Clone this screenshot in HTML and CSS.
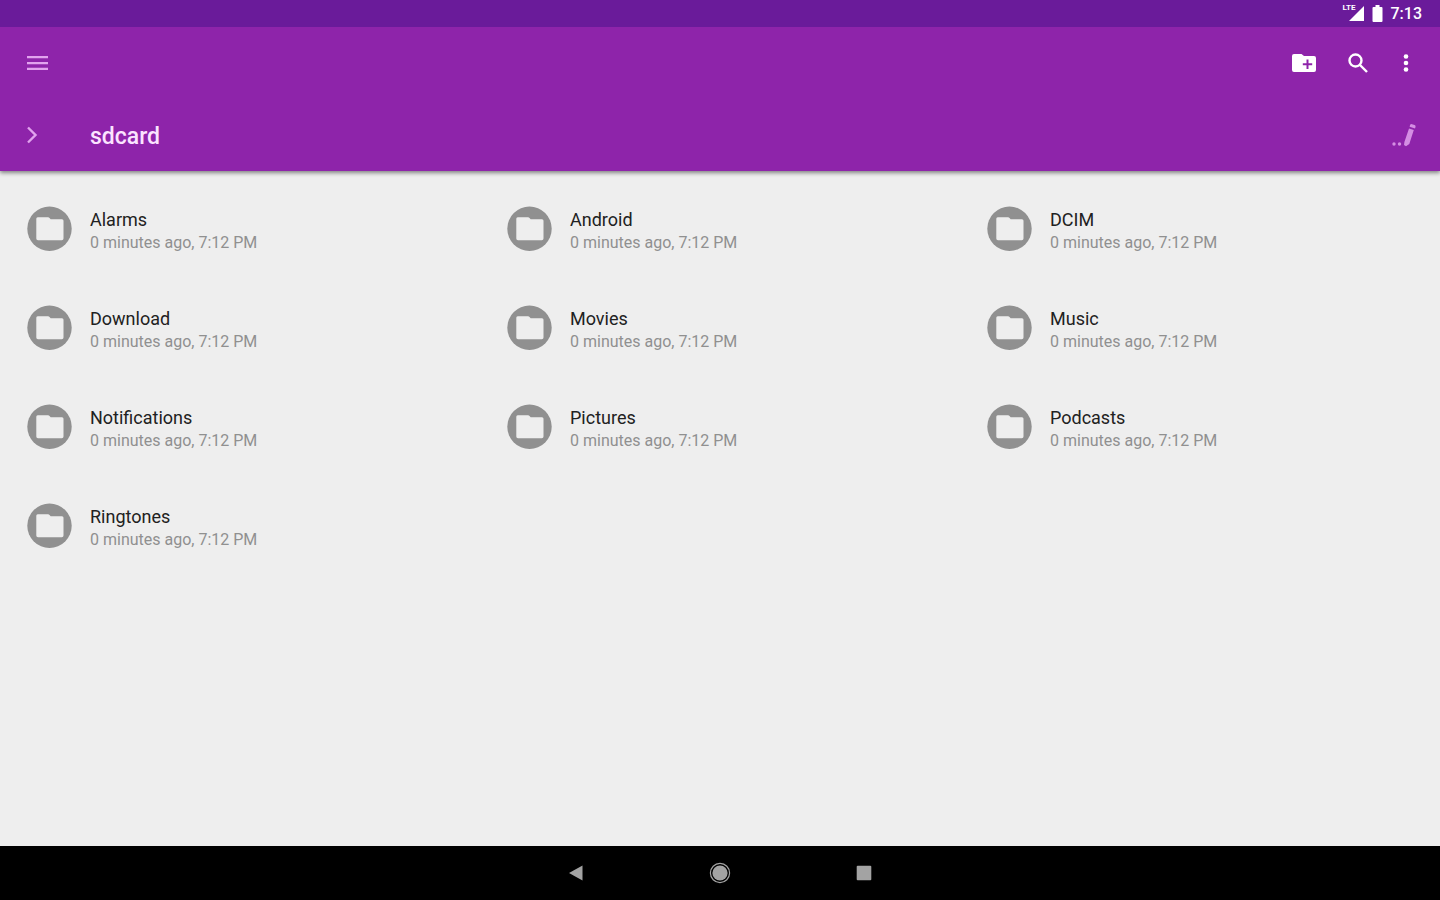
FILE: index.html
```html
<!DOCTYPE html>
<html lang="en">
<head>
<meta charset="utf-8">
<meta name="viewport" content="width=device-width, initial-scale=1">
<title>sdcard</title>
<link rel="stylesheet" href="styles.css">
</head>
<body>
<svg class="defs" width="0" height="0" aria-hidden="true">
  <symbol id="folder" viewBox="0 0 45 45">
    <circle cx="22.5" cy="22.700" r="22.2" fill="#909090"/>
    <path d="M10.700 11.200h10.300q1 0 1.500.8l1.200 1.300H35a1.500 1.500 0 0 1 1.500 1.500v17.700a1.700 1.700 0 0 1-1.700 1.700H11a1.700 1.700 0 0 1-1.700-1.700V12.700a1.500 1.500 0 0 1 1.400-1.500z" fill="#eee"/>
  </symbol>
</svg>
<div class="status">
  <span class="network">
    <span class="lte">LTE</span>
    <svg class="signal" width="15" height="15" viewBox="0 0 15 15" aria-hidden="true"><path d="M15 0v15H0z"/></svg>
  </span>
  <svg class="battery" width="11" height="17" viewBox="0 0 11 17" aria-hidden="true"><path d="M3.500 0h4v2H9.500a1 1 0 0 1 1 1v13a1 1 0 0 1-1 1h-8a1 1 0 0 1-1-1V3a1 1 0 0 1 1-1h2z"/></svg>
  <time class="clock">7:13</time>
</div>
<header class="appbar">
  <div class="bar">
    <button class="icon soft" aria-label="Menu"><svg width="21" height="14" viewBox="0 0 21 14"><path d="M0 0h21v2.300H0zM0 5.900h21v2.300H0zM0 11.700h21V14H0z"/></svg></button>
    <div class="actions">
      <button class="icon" aria-label="New folder"><svg width="24" height="20" viewBox="0 0 24 20"><path fill-rule="evenodd" d="M2 1h7.500L12 3h10a2 2 0 0 1 2 2v12a2 2 0 0 1-2 2H2a2 2 0 0 1-2-2V3a2 2 0 0 1 2-2zM14.500 6.500v3.700H10.800v2h3.700v3.700h2v-3.700h3.700v-2h-3.700V6.500z"/></svg></button>
      <button class="icon" aria-label="Search"><svg width="20" height="20" viewBox="0 0 20 20"><g fill="none" stroke="currentColor" stroke-width="2.400"><circle cx="7.500" cy="7.500" r="6"/><path d="M12 12l7 7"/></g></svg></button>
      <button class="icon" aria-label="More options"><svg width="6" height="20" viewBox="0 0 6 20"><circle cx="3" cy="3.500" r="2.300"/><circle cx="3" cy="10" r="2.300"/><circle cx="3" cy="16.500" r="2.300"/></svg></button>
    </div>
  </div>
  <div class="bar">
    <div class="path">
      <button class="icon soft" aria-label="Path"><svg width="11" height="18" viewBox="0 0 11 18"><path d="M1 1.500L8.500 9 1 16.500" fill="none" stroke="currentColor" stroke-width="2.400"/></svg></button>
      <h1 class="title">sdcard</h1>
    </div>
    <button class="icon edit" aria-label="Edit path"><svg width="24" height="24" viewBox="0 0 24 24"><circle cx="2" cy="21" r="1.700"/><circle cx="7.500" cy="21" r="1.700"/><path d="M17 5.500l4.800 1.500-4.500 14-3.300 2.300-2-1.200.4-3zM18 2.200q.6-1.500 2-1l2.600.8q1.400.5.9 1.900l-.5 1.600-5.400-1.700z"/></svg></button>
  </div>
</header>
<main class="content">
  <ul class="grid">
    <li><button class="item"><svg class="folder"><use href="#folder"/></svg><span class="text"><span class="name">Alarms</span><span class="date">0 minutes ago, 7:12 PM</span></span></button></li>
    <li><button class="item"><svg class="folder"><use href="#folder"/></svg><span class="text"><span class="name">Android</span><span class="date">0 minutes ago, 7:12 PM</span></span></button></li>
    <li><button class="item"><svg class="folder"><use href="#folder"/></svg><span class="text"><span class="name">DCIM</span><span class="date">0 minutes ago, 7:12 PM</span></span></button></li>
    <li><button class="item"><svg class="folder"><use href="#folder"/></svg><span class="text"><span class="name">Download</span><span class="date">0 minutes ago, 7:12 PM</span></span></button></li>
    <li><button class="item"><svg class="folder"><use href="#folder"/></svg><span class="text"><span class="name">Movies</span><span class="date">0 minutes ago, 7:12 PM</span></span></button></li>
    <li><button class="item"><svg class="folder"><use href="#folder"/></svg><span class="text"><span class="name">Music</span><span class="date">0 minutes ago, 7:12 PM</span></span></button></li>
    <li><button class="item"><svg class="folder"><use href="#folder"/></svg><span class="text"><span class="name">Notifications</span><span class="date">0 minutes ago, 7:12 PM</span></span></button></li>
    <li><button class="item"><svg class="folder"><use href="#folder"/></svg><span class="text"><span class="name">Pictures</span><span class="date">0 minutes ago, 7:12 PM</span></span></button></li>
    <li><button class="item"><svg class="folder"><use href="#folder"/></svg><span class="text"><span class="name">Podcasts</span><span class="date">0 minutes ago, 7:12 PM</span></span></button></li>
    <li><button class="item"><svg class="folder"><use href="#folder"/></svg><span class="text"><span class="name">Ringtones</span><span class="date">0 minutes ago, 7:12 PM</span></span></button></li>
  </ul>
</main>
<nav class="navbar" aria-label="System">
  <button class="key" aria-label="Back"><svg width="22" height="22" viewBox="0 0 22 22"><path d="M17.500 3.500v15L4 11z"/></svg></button>
  <button class="key" aria-label="Home"><svg width="22" height="22" viewBox="0 0 22 22"><circle cx="11" cy="11" r="7.600"/><circle cx="11" cy="11" r="9.600" fill="none" stroke="currentColor" stroke-width="1.200"/></svg></button>
  <button class="key" aria-label="Recent apps"><svg width="22" height="22" viewBox="0 0 22 22"><rect x="3.700" y="3.800" width="14.600" height="14.400" rx="1"/></svg></button>
</nav>
</body>
</html>
```

FILE: styles.css
```css
* { box-sizing: border-box; }

body {
  margin: 0;
  min-height: 100vh;
  display: flex;
  flex-direction: column;
  background: #eee;
  font-family: Roboto, "Liberation Sans", sans-serif;
}

svg { display: block; fill: currentColor; }

button {
  margin: 0;
  padding: 0;
  border: 0;
  background: none;
  color: inherit;
  font: inherit;
  text-align: left;
  cursor: pointer;
}

.defs { position: absolute; }

.status {
  position: relative;
  z-index: 1;
  display: flex;
  align-items: center;
  justify-content: flex-end;
  gap: 8px;
  height: 27px;
  padding-right: 18px;
  background: #6a1b9a;
  color: #fff;
}

.network { position: relative; }

.lte {
  position: absolute;
  right: 8px;
  top: -2px;
  font-size: 8px;
  line-height: 8px;
  font-weight: 700;
}

.clock {
  padding-top: 1px;
  font-size: 16px;
  line-height: 26px;
  font-weight: 500;
}

.appbar {
  position: relative;
  background: #8e24aa;
  color: #fff;
  box-shadow: 0 2px 4px rgba(0, 0, 0, 0.45);
}

.bar {
  display: flex;
  align-items: center;
  justify-content: space-between;
  height: 72px;
  padding: 0 24px 0 27px;
}

.actions {
  display: flex;
  align-items: center;
  gap: 32px;
  padding-right: 7px;
}

.actions .icon:last-child { margin-left: 3px; }

.path {
  display: grid;
  grid-template-columns: 63px auto;
  align-items: center;
}

.soft { color: #e1a3ee; }
.edit { color: #d48ee3; }

.title {
  margin: 0;
  padding-top: 3px;
  font-size: 23px;
  line-height: 28px;
  font-weight: 500;
  color: #fbe4ff;
}

.content {
  flex: 1;
  padding-top: 8px;
}

.grid {
  display: grid;
  grid-template-columns: repeat(3, 1fr);
  margin: 0;
  padding: 0;
  list-style: none;
}

.item {
  display: flex;
  align-items: center;
  gap: 18px;
  width: 100%;
  height: 99px;
  padding-left: 27px;
}

.folder { width: 45px; height: 45px; }

.text {
  display: flex;
  flex-direction: column;
  padding-top: 4px;
}

.name {
  font-size: 18px;
  line-height: 23px;
  color: #212121;
}

.date {
  font-size: 16px;
  line-height: 23px;
  color: #909090;
}

.navbar {
  display: flex;
  align-items: center;
  justify-content: center;
  gap: 122px;
  height: 54px;
  background: #000;
  color: #a3a3a3;
}
```
